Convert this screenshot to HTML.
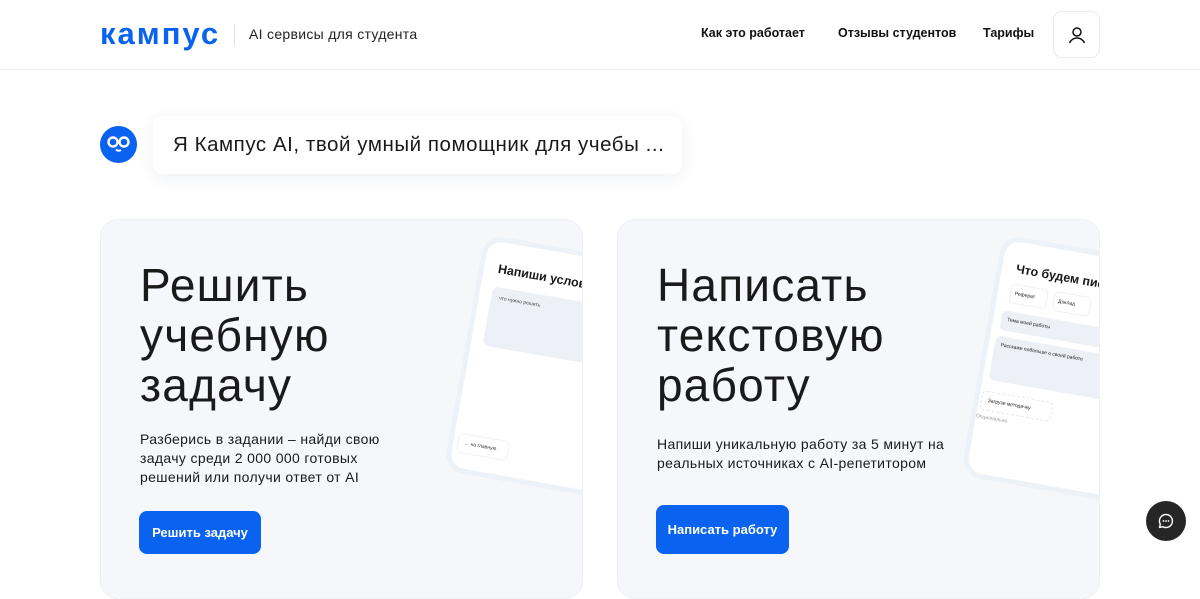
<!DOCTYPE html>
<html><head><meta charset="utf-8"><style>
*{margin:0;padding:0;box-sizing:border-box}
body{width:1200px;height:563px;overflow:hidden;background:#fff;font-family:"Liberation Sans",sans-serif;color:#1a1a1a;position:relative}
.hdr{position:absolute;left:0;top:0;width:1200px;height:70px;border-bottom:1px solid #eceef2}
.logo{position:absolute;left:100px;top:16px;font-size:31px;font-weight:bold;color:#0a63f0;letter-spacing:2px}
.sep{position:absolute;left:234px;top:24px;width:1px;height:22px;background:#dfe3ea}
.tag{position:absolute;left:249px;top:26px;font-size:14px;color:#222;letter-spacing:.3px}
.nav{position:absolute;top:26px;font-size:12.5px;font-weight:bold;color:#111}
.user{position:absolute;left:1053px;top:11px;width:47px;height:47px;border:1px solid #e8eaef;border-radius:9px}
.bot{position:absolute;left:100px;top:126px;width:37px;height:37px;border-radius:50%;background:#0a63f0}
.bubble{position:absolute;left:153px;top:116px;width:529px;height:58px;background:#fff;border-radius:10px;box-shadow:0 4px 16px rgba(30,50,90,.08);font-size:20.5px;letter-spacing:.55px;padding:17px 0 0 20px;color:#1a1a1a;white-space:nowrap}
.card{position:absolute;top:219px;width:483px;height:380px;background:#f5f7fb;border:1px solid #eef0f4;border-radius:18px;overflow:hidden}
.card h2{position:absolute;left:39px;top:40px;font-size:46px;letter-spacing:1.2px;font-weight:normal;line-height:50px;color:#1a1a1a}
.card p{position:absolute;left:39px;font-size:14px;letter-spacing:.35px;line-height:19px;color:#1a1a1a;white-space:nowrap}
.btn{position:absolute;left:38px;background:#0a63f0;color:#fff;font-size:13px;font-weight:bold;border-radius:8px;text-align:center}
.phone{position:absolute;background:#fff;border:5px solid #edf2f8;border-radius:20px;transform:rotate(10deg);transform-origin:0 0}
.chat{position:absolute;left:1146px;top:501px;width:40px;height:40px;border-radius:50%;background:#262626}
</style></head><body>
<div class="hdr">
<div class="logo">кампус</div><div class="sep"></div>
<div class="tag">AI сервисы для студента</div>
<div class="nav" style="left:701px">Как это работает</div>
<div class="nav" style="left:838px">Отзывы студентов</div>
<div class="nav" style="left:983px">Тарифы</div>
<div class="user"><svg width="47" height="47" viewBox="0 0 47 47"><circle cx="23" cy="20" r="4" fill="none" stroke="#111" stroke-width="1.5"/><path d="M15.5 31c2-4 5-5 7.5-5s5.5 1 7.5 5" fill="none" stroke="#111" stroke-width="1.5"/></svg></div>
</div>
<div class="bot"><svg width="37" height="37" viewBox="0 0 37 37"><circle cx="13" cy="16" r="4.5" fill="none" stroke="#fff" stroke-width="2.4"/><circle cx="24" cy="16" r="4.5" fill="none" stroke="#fff" stroke-width="2.4"/><path d="M16 23.5c1.5 1.5 3.5 1.5 5 .5" fill="none" stroke="#fff" stroke-width="2"/></svg></div>
<div class="bubble">Я Кампус AI, твой умный помощник для учебы ...</div>

<div class="card" style="left:100px">
<h2>Решить<br>учебную<br>задачу</h2>
<p style="top:210px">Разберись в задании – найди свою<br>задачу среди 2 000 000 готовых<br>решений или получи ответ от AI</p>
<div class="btn" style="top:291px;width:122px;height:43px;line-height:43px">Решить задачу</div>
<div class="phone" style="left:384px;top:14px;width:180px;height:240px">
<div style="position:absolute;left:14px;top:20px;font-size:12.5px;font-weight:bold;white-space:nowrap">Напиши условие</div>
<div style="position:absolute;left:12px;top:45px;width:160px;height:60px;background:#edf1f7;border-radius:6px;font-size:5px;padding:8px;color:#444">что нужно решить</div>
<div style="position:absolute;left:4px;top:195px;width:52px;height:20px;border:1px solid #eef0f4;border-radius:5px;font-size:5px;padding:6px;color:#333">← на главную</div>
</div>
</div>

<div class="card" style="left:617px">
<h2>Написать<br>текстовую<br>работу</h2>
<p style="top:215px">Напиши уникальную работу за 5 минут на<br>реальных источниках с AI-репетитором</p>
<div class="btn" style="top:285px;width:133px;height:49px;line-height:49px">Написать работу</div>
<div class="phone" style="left:385px;top:14px;width:180px;height:245px">
<div style="position:absolute;left:14px;top:20px;font-size:12.5px;font-weight:bold;white-space:nowrap">Что будем писать</div>
<div style="position:absolute;left:12px;top:42px;width:38px;height:20px;border:1px solid #eef0f4;border-radius:5px;font-size:5px;padding:6px 4px">Реферат</div>
<div style="position:absolute;left:56px;top:42px;width:38px;height:20px;border:1px solid #eef0f4;border-radius:5px;font-size:5px;padding:6px 4px">Доклад</div>
<div style="position:absolute;left:8px;top:70px;width:165px;height:20px;background:#edf1f7;border-radius:5px;font-size:5px;padding:6px">Тема моей работы</div>
<div style="position:absolute;left:6px;top:96px;width:165px;height:45px;background:#edf1f7;border-radius:5px;font-size:5px;padding:6px">Расскажи побольше о своей работе</div>
<div style="position:absolute;left:2px;top:152px;width:72px;height:20px;border:1px dashed #e2e6ec;border-radius:5px;font-size:5px;padding:6px">Загрузи методичку</div>
<div style="position:absolute;left:0;top:176px;font-size:5px;color:#999">Опционально</div>
</div>
</div>

<div class="chat"><svg width="40" height="40" viewBox="0 0 40 40"><path d="M20 13.5a6.5 6.5 0 1 1-3.2 12.2L13.5 26.5l.8-3.3A6.5 6.5 0 0 1 20 13.5z" fill="none" stroke="#fff" stroke-width="1.4" stroke-linejoin="round"/><circle cx="17.5" cy="20" r=".9" fill="#fff"/><circle cx="20" cy="20" r=".9" fill="#fff"/><circle cx="22.5" cy="20" r=".9" fill="#fff"/></svg></div>
</body></html>
